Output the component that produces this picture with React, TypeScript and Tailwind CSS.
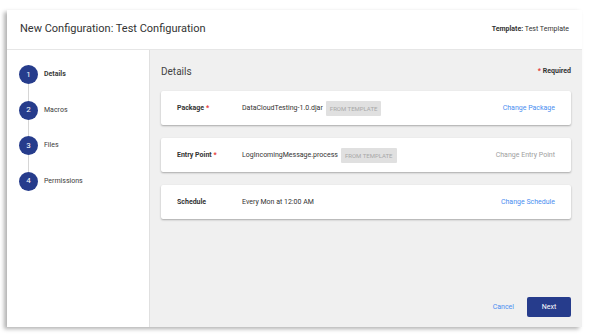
const steps = ["Details", "Macros", "Files", "Permissions"];

type Row = {
  label: string;
  required?: boolean;
  value: string;
  template?: boolean;
  action: string;
  disabled?: boolean;
};

const rows: Row[] = [
  { label: "Package", required: true, value: "DataCloudTesting-1.0.djar", template: true, action: "Change Package" },
  {
    label: "Entry Point",
    required: true,
    value: "LogIncomingMessage.process",
    template: true,
    action: "Change Entry Point",
    disabled: true,
  },
  { label: "Schedule", value: "Every Mon at 12:00 AM", action: "Change Schedule" },
];

export default function App() {
  return (
    <div className="h-[336px] w-[592px] bg-white pl-[7px] pt-[10px] font-['Roboto',sans-serif]">
      <div className="flex h-[317px] w-[575px] flex-col bg-white shadow-[-3px_2px_4px_rgba(0,0,0,0.3)]">
        <header className="flex h-[40px] shrink-0 items-center justify-between border-b border-[#e6e6e6] px-[13px]">
          <h1 className="text-[11px] text-[#333]">New Configuration: Test Configuration</h1>
          <p className="text-[7px] text-[#333]">
            <span className="font-bold">Template:</span> Test Template
          </p>
        </header>

        <div className="flex min-h-0 flex-1">
          <aside className="w-[143px] shrink-0 border-r border-[#e0e0e0] bg-white pl-[12px] pt-[15px]">
            {steps.map((s, i) => (
              <div key={s}>
                {i > 0 ? <div className="ml-[9px] h-[16.5px] w-px bg-[#d6d6d6]" /> : null}
                <div className="flex items-center gap-[6px]">
                  <div className="flex h-[19px] w-[19px] items-center justify-center rounded-full bg-[#263c8c] text-[8px] text-white">
                    {i + 1}
                  </div>
                  <span className={`text-[7px] text-[#3a3a3a] ${i === 0 ? "font-bold" : ""}`}>{s}</span>
                </div>
              </div>
            ))}
          </aside>

          <main className="flex flex-1 flex-col bg-[#f0f0f0] px-[11px] pb-[10px] pt-[14px]">
            <div className="flex items-center justify-between">
              <h2 className="text-[10px] text-[#444]">Details</h2>
              <p className="text-[7px] font-bold text-[#333]">
                <span className="text-[#e53935]">*</span> Required
              </p>
            </div>

            <div className="mt-[12px] flex flex-col gap-[13px]">
              {rows.map((r) => (
                <div
                  key={r.label}
                  className="flex h-[34px] items-center rounded-[2px] bg-white pl-[16px] pr-[16px] shadow-[0_1px_2px_rgba(0,0,0,0.3)]"
                >
                  <div className="w-[65px] text-[7px] font-bold text-[#333]">
                    {r.label}
                    {r.required ? <span className="text-[#e53935]"> *</span> : null}
                  </div>
                  <div className="flex flex-1 items-center gap-[3px] text-[7px] text-[#333]">
                    {r.value}
                    {r.template ? (
                      <span className="rounded-[1px] bg-[#e0e0e0] px-[4px] py-[3px] text-[6px] text-[#a8a8a8]">
                        FROM TEMPLATE
                      </span>
                    ) : null}
                  </div>
                  <span className={`text-[7px] ${r.disabled ? "text-[#a0a0a0]" : "text-[#4a8ef0]"}`}>{r.action}</span>
                </div>
              ))}
            </div>

            <div className="mt-auto flex items-center justify-end gap-[13px]">
              <span className="text-[7px] text-[#4a8ef0]">Cancel</span>
              <button className="h-[20px] w-[44px] rounded-[2px] bg-[#263c8c] text-[7px] text-white">Next</button>
            </div>
          </main>
        </div>
      </div>
    </div>
  );
}
